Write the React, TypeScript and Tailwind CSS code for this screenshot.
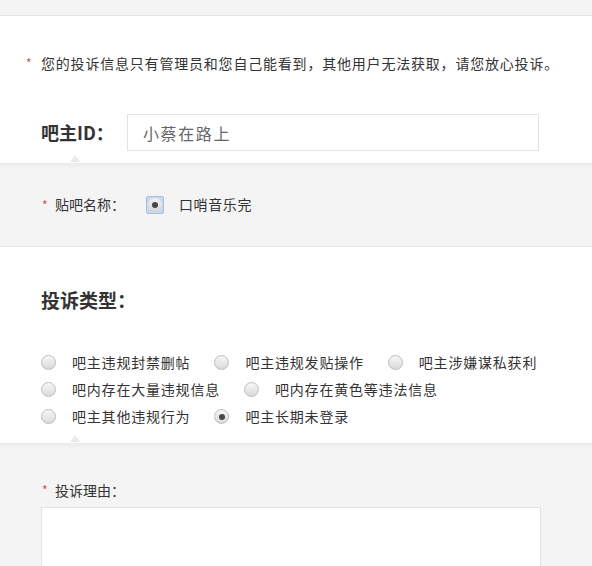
import React from 'react';

const FONT = "font-['Noto_Sans_CJK_SC','Noto_Sans',sans-serif]";

function Radio({ checked = false }: { checked?: boolean }) {
  return (
    <span className="flex h-[15px] w-[15px] shrink-0 items-center justify-center rounded-full border border-[#bdbdbd] bg-[linear-gradient(to_bottom,#f7f7f7,#d9d9d9)]">
      {checked && <span className="h-[6px] w-[6px] rounded-full bg-[#474747]" />}
    </span>
  );
}

function Marker() {
  // small tip pointing up from the next section
  return (
    <span className="absolute bottom-[1px] left-[70px] h-0 w-0 border-x-[5px] border-b-[7px] border-x-transparent border-b-[#ebebeb]" />
  );
}

const rows: { label: string; checked?: boolean }[][] = [
  [{ label: '吧主违规封禁删帖' }, { label: '吧主违规发贴操作' }, { label: '吧主涉嫌谋私获利' }],
  [{ label: '吧内存在大量违规信息' }, { label: '吧内存在黄色等违法信息' }],
  [{ label: '吧主其他违规行为' }, { label: '吧主长期未登录', checked: true }],
];

export default function App() {
  return (
    <div className={`min-h-[566px] bg-[#f4f4f4] text-[#333] ${FONT}`}>
      <div className="h-[16px] border-b border-[#e3e3e3] bg-[#f4f4f4]" />

      {/* notice + ID */}
      <section className="relative h-[147px] bg-white pt-[37px]">
        <div className="flex h-[20px] items-center pl-[26px] text-[14px] leading-[20px]">
          <span className="w-[15px] text-[12px] text-[#e8434f]">*</span>
          <span className="tracking-[0.8px]">您的投诉信息只有管理员和您自己能看到，其他用户无法获取，请您放心投诉。</span>
        </div>
        <div className="mt-[41px] flex h-[37px] items-center pl-[41px]">
          <span className="w-[86px] text-[18px] font-bold text-[#333]">吧主ID：</span>
          <div className="flex h-[37px] w-[412px] items-center border border-[#e2e2e2] bg-white pl-[15px] text-[16px] tracking-[1.6px] text-[#666]">
            小蔡在路上
          </div>
        </div>
        <Marker />
      </section>

      {/* forum name */}
      <section className="flex h-[84px] items-center border-b border-[#e6e6e6] bg-[linear-gradient(to_bottom,#e9e9e9,#f4f4f4_5px)] pl-[42px] text-[14px]">
        <span className="w-[13px] text-[12px] text-[#e8434f]">*</span>
        <span className="w-[91px]">贴吧名称：</span>
        <span className="flex h-[18px] w-[18px] items-center justify-center rounded-[2px] border border-[#a8bfe3] bg-[#c9d8ef]">
          <span className="flex h-[14px] w-[14px] items-center justify-center rounded-full bg-[linear-gradient(to_bottom,#f2f2f2,#d6d6d6)]">
            <span className="h-[6px] w-[6px] rounded-full bg-[#474747]" />
          </span>
        </span>
        <span className="ml-[15px] tracking-[0.6px]">口哨音乐完</span>
      </section>

      {/* complaint type */}
      <section className="relative h-[196px] bg-white pt-[40px]">
        <div className="h-[26px] pl-[41px] text-[19px] font-semibold leading-[26px] text-[#333]">投诉类型：</div>
        <div className="mt-[36px] pl-[41px] text-[14px]">
          {rows.map((row, i) => (
            <div key={i} className="flex h-[27px] items-center">
              {row.map((item) => (
                <div key={item.label} className="mr-[24px] flex items-center">
                  <Radio checked={item.checked} />
                  <span className="ml-[16px] tracking-[0.8px]">{item.label}</span>
                </div>
              ))}
            </div>
          ))}
        </div>
        <Marker />
      </section>

      {/* reason */}
      <section className="bg-[linear-gradient(to_bottom,#e9e9e9,#f4f4f4_5px)] pt-[37px] pb-[20px]">
        <div className="flex h-[20px] items-center pl-[42px] text-[14px]">
          <span className="w-[13px] text-[12px] text-[#e8434f]">*</span>
          <span>投诉理由：</span>
        </div>
        <textarea className="mt-[7px] ml-[41px] block h-[120px] w-[500px] resize-none border border-[#e2e2e2] bg-white outline-none" />
      </section>
    </div>
  );
}
